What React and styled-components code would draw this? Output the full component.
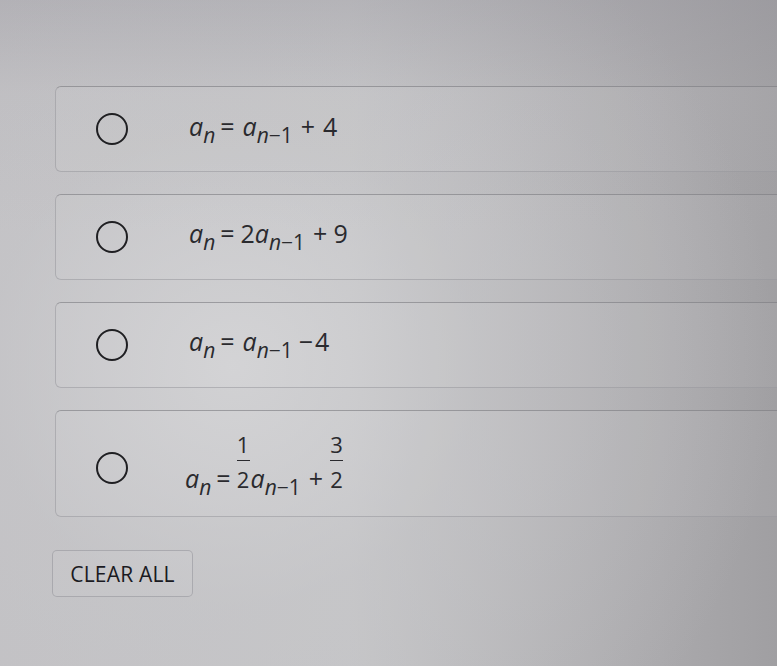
import React from "react";
import styled, { createGlobalStyle } from "styled-components";

const Global = createGlobalStyle`
  html, body { margin: 0; padding: 0; overflow: hidden; }
  body { font-family: "Open Sans", "Noto Sans", sans-serif; }
`;

const Page = styled.div`
  width: 777px;
  height: 666px;
  overflow: hidden;
  box-sizing: border-box;
  padding: 86px 0 0 55px;
  background:
    linear-gradient(180deg, rgba(150,148,156,0.35) 0%, rgba(170,168,174,0.12) 14%, rgba(200,200,202,0) 35%),
    radial-gradient(ellipse 70% 80% at 30% 55%, rgba(212,212,214,0.85) 0%, rgba(200,200,203,0.45) 45%, rgba(160,159,162,0) 100%),
    linear-gradient(90deg, #c1c0c3 0%, #c4c4c6 45%, #aaa9ac 85%, #a09fa2 100%);
`;

const List = styled.div`
  width: 760px;
  display: flex;
  flex-direction: column;
  gap: 22px;
`;

const Card = styled.div`
  height: ${(p) => p.$h}px;
  box-sizing: border-box;
  display: flex;
  align-items: center;
  padding-left: 40px;
  border: 1px solid rgba(150, 150, 156, 0.55);
  border-top-color: rgba(120, 120, 126, 0.6);
  border-radius: 6px;
  background: rgba(255, 255, 255, 0.05);
`;

const Radio = styled.span`
  width: 28px;
  height: 28px;
  border: 2.5px solid #1f1f22;
  border-radius: 50%;
  flex: none;
  margin-top: ${(p) => p.$dy || 0}px;
`;

const Math = styled.span`
  margin-left: ${(p) => p.$ml}px;
  margin-top: ${(p) => p.$mt || 0}px;
  font-family: "Open Sans", "DejaVu Sans", sans-serif;
  font-size: 25px;
  line-height: 1;
  color: #2a2a2e;
  white-space: nowrap;
`;

const V = styled.i`
  font-style: italic;
`;

const Sub = styled.sub`
  font-size: 21px;
  vertical-align: -7px;
  line-height: 1;
`;

const Op = styled.span`
  margin: 0 ${(p) => p.$r ?? 4}px 0 ${(p) => p.$l ?? 4}px;
`;

const Frac = styled.span`
  display: inline-block;
  text-align: center;
  vertical-align: baseline;
  margin: 0 1px;
`;

const Num = styled.span`
  display: block;
  line-height: 1;
  font-size: 22px;
`;

const Bar = styled.span`
  display: block;
  width: 13px;
  margin: 5px auto 7px;
  border-top: 1.5px solid #2a2a2e;
`;

const Button = styled.button`
  margin-top: 33px;
  margin-left: -3px;
  width: 141px;
  height: 47px;
  box-sizing: border-box;
  border: 1px solid rgba(150, 150, 156, 0.6);
  border-radius: 5px;
  background: rgba(255, 255, 255, 0.04);
  font-family: "Open Sans", "Noto Sans", sans-serif;
  font-size: 21px;
  font-weight: 500;
  color: #1a1a22;
  letter-spacing: 0.2px;
  padding: 0;
`;

export default function App() {
  return (
    <Page>
      <Global />
      <List>
        <Card $h={86}>
          <Radio />
          <Math $ml={61} $mt={2}>
            <V>a</V><Sub><V>n</V></Sub>
            <Op $l={5} $r={8}>=</Op>
            <V>a</V><Sub><V>n</V>−1</Sub>
            <Op $l={8} $r={8}>+</Op>4
          </Math>
        </Card>
        <Card $h={86}>
          <Radio />
          <Math $ml={61} $mt={0}>
            <V>a</V><Sub><V>n</V></Sub>
            <Op $l={5} $r={6}>=</Op>
            2<V>a</V><Sub><V>n</V>−1</Sub>
            <Op $l={8} $r={6}>+</Op>9
          </Math>
        </Card>
        <Card $h={86}>
          <Radio />
          <Math $ml={61} $mt={0}>
            <V>a</V><Sub><V>n</V></Sub>
            <Op $l={5} $r={8}>=</Op>
            <V>a</V><Sub><V>n</V>−1</Sub>
            <Op $l={6} $r={2}>−</Op>4
          </Math>
        </Card>
        <Card $h={107}>
          <Radio $dy={8} />
          <Math $ml={57} $mt={4}>
            <V>a</V><Sub><V>n</V></Sub>
            <Op $l={5} $r={5}>=</Op>
            <Frac><Num>1</Num><Bar /><Num>2</Num></Frac>
            <V>a</V><Sub><V>n</V>−1</Sub>
            <Op $l={8} $r={6}>+</Op>
            <Frac><Num>3</Num><Bar /><Num>2</Num></Frac>
          </Math>
        </Card>
      </List>
      <Button>CLEAR ALL</Button>
    </Page>
  );
}
